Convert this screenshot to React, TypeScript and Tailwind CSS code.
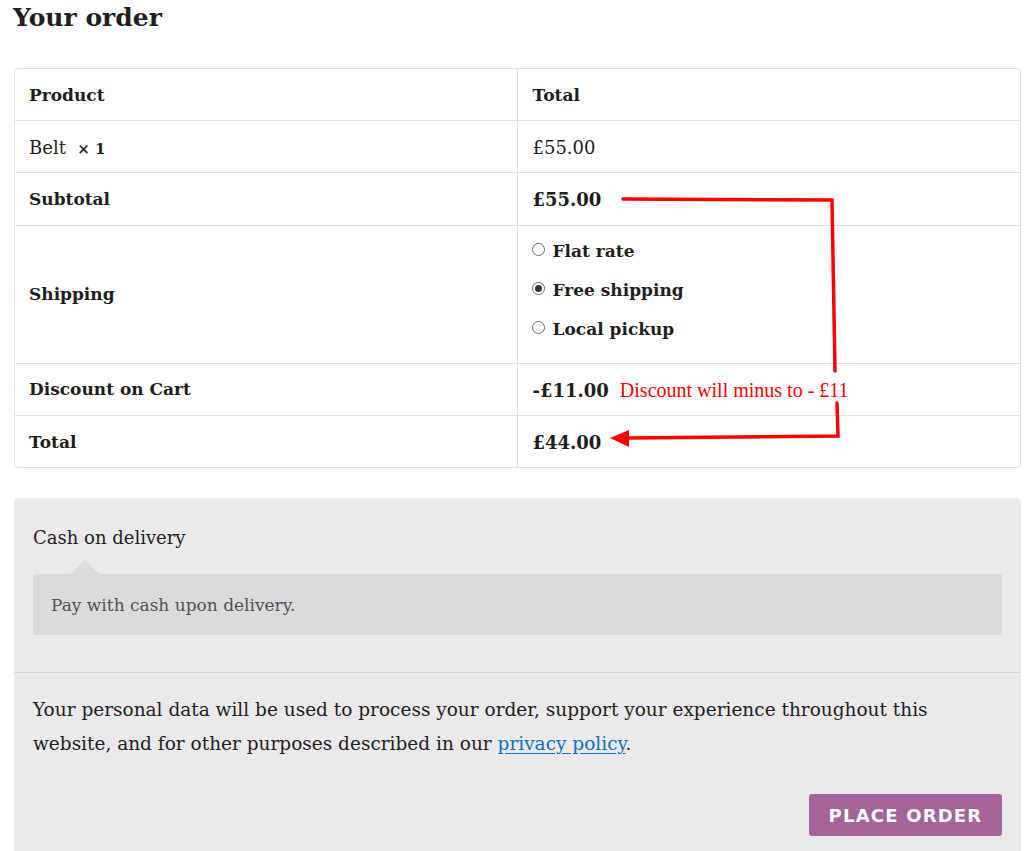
import React from 'react'

const serif = { fontFamily: '"DejaVu Serif", "Liberation Serif", serif' }

function Radio({ checked }: { checked?: boolean }) {
  return (
    <span className="ml-[-1px] mt-[-6px] flex h-[13px] w-[13px] shrink-0 items-center justify-center rounded-full border border-[#6f6f6f] bg-white">
      {checked && <span className="h-[7px] w-[7px] rounded-full bg-[#333]" />}
    </span>
  )
}

export default function App() {
  const shipping = [
    { label: 'Flat rate' },
    { label: 'Free shipping', checked: true },
    { label: 'Local pickup' },
  ]

  return (
    <div className="relative h-[851px] w-[1034px] overflow-hidden bg-white text-[#1e1e1e]" style={serif}>
      <h2 className="ml-[13px] h-[68px] text-[25px] font-bold leading-[35px]">Your order</h2>

      {/* Order table */}
      <div className="mx-[14px] w-[1007px] overflow-hidden rounded-[4px] border border-[#e1e1e1]">
        <table className="w-full border-collapse text-[17px] [&_td]:pt-[2px] [&_th]:pt-[2px]">
          <tbody>
            <tr className="h-[51px] border-b border-[#e1e1e1]">
              <th className="w-[502px] border-r border-[#e1e1e1] pl-[14px] text-left font-bold">Product</th>
              <th className="pl-[15px] text-left font-bold">Total</th>
            </tr>
            <tr className="h-[52px] border-b border-[#e1e1e1]">
              <td className="border-r border-[#e1e1e1] pl-[14px] text-[18px]">
                Belt&nbsp; <strong className="text-[15px]">× 1</strong>
              </td>
              <td className="pl-[15px] text-[18px]">£55.00</td>
            </tr>
            <tr className="h-[53px] border-b border-[#e1e1e1]">
              <th className="border-r border-[#e1e1e1] pl-[14px] text-left font-bold">Subtotal</th>
              <td className="pl-[15px] text-[18px] font-bold">£55.00</td>
            </tr>
            <tr className="h-[138px] border-b border-[#e1e1e1]">
              <th className="border-r border-[#e1e1e1] pl-[14px] text-left font-bold">Shipping</th>
              <td className="pl-[15px] align-top">
                <ul className="flex flex-col gap-[14px] pt-[12px]">
                  {shipping.map((s) => (
                    <li key={s.label} className="flex h-[25px] items-center gap-[8px]">
                      <Radio checked={s.checked} />
                      <span className="font-bold">{s.label}</span>
                    </li>
                  ))}
                </ul>
              </td>
            </tr>
            <tr className="h-[52px] border-b border-[#e1e1e1]">
              <th className="border-r border-[#e1e1e1] pl-[14px] text-left font-bold">Discount on Cart</th>
              <td className="pl-[15px]">
                <span className="text-[18px] font-bold">-£11.00</span>
                <span
                  className="ml-[11px] text-[20px] text-[#ff0000]"
                  style={{ fontFamily: '"Liberation Serif", serif' }}
                >
                  Discount will minus to - £11
                </span>
              </td>
            </tr>
            <tr className="h-[52px]">
              <th className="border-r border-[#e1e1e1] pl-[14px] text-left font-bold">Total</th>
              <td className="pl-[15px] text-[18px] font-bold">£44.00</td>
            </tr>
          </tbody>
        </table>
      </div>

      {/* Payment */}
      <div className="mx-[14px] mt-[30px] w-[1007px] rounded-t-[5px] bg-[#ebe9eb]">
        <div className="px-[19px] pb-[37px] pt-[26px]">
          <p className="text-[18px] leading-[28px]">Cash on delivery</p>
          <div className="relative mt-[22px] rounded-[2px] bg-[#dcdadc] px-[18px] pb-[17px] pt-[18px] text-[17px] leading-[26px] text-[#515151]">
            <span className="absolute left-[38px] top-[-14px] h-0 w-0 border-x-[14px] border-b-[14px] border-x-transparent border-b-[#dcdadc]" />
            Pay with cash upon delivery.
          </div>
        </div>
        <div className="border-t border-[#d6d2d5] px-[19px] pb-[40px] pt-[20px]">
          <p className="text-[18.5px] leading-[34px]">
            Your personal data will be used to process your order, support your experience throughout this website, and
            for other purposes described in our{' '}
            <a href="#" className="text-[#0e70c0] underline underline-offset-[3px]">
              privacy policy
            </a>
            .
          </p>
          <div className="mt-[33px] flex justify-end">
            <button
              className="h-[42px] w-[193px] rounded-[3px] bg-[#a46497] text-[18px] font-bold tracking-[1.2px] text-white"
              style={{ fontFamily: '"DejaVu Sans", sans-serif' }}
            >
              PLACE ORDER
            </button>
          </div>
        </div>
      </div>

      {/* Annotation arrows */}
      <svg className="pointer-events-none absolute inset-0" width="1034" height="851">
        <polyline points="623,199 832,200 835,371" fill="none" stroke="#ff0000" strokeWidth="3.5" strokeLinecap="round" />
        <polyline points="837,403 838,436 626,438" fill="none" stroke="#ff0000" strokeWidth="3.5" strokeLinecap="round" />
        <polygon points="610,438 629,430 629,447" fill="#ff0000" />
      </svg>
    </div>
  )
}
